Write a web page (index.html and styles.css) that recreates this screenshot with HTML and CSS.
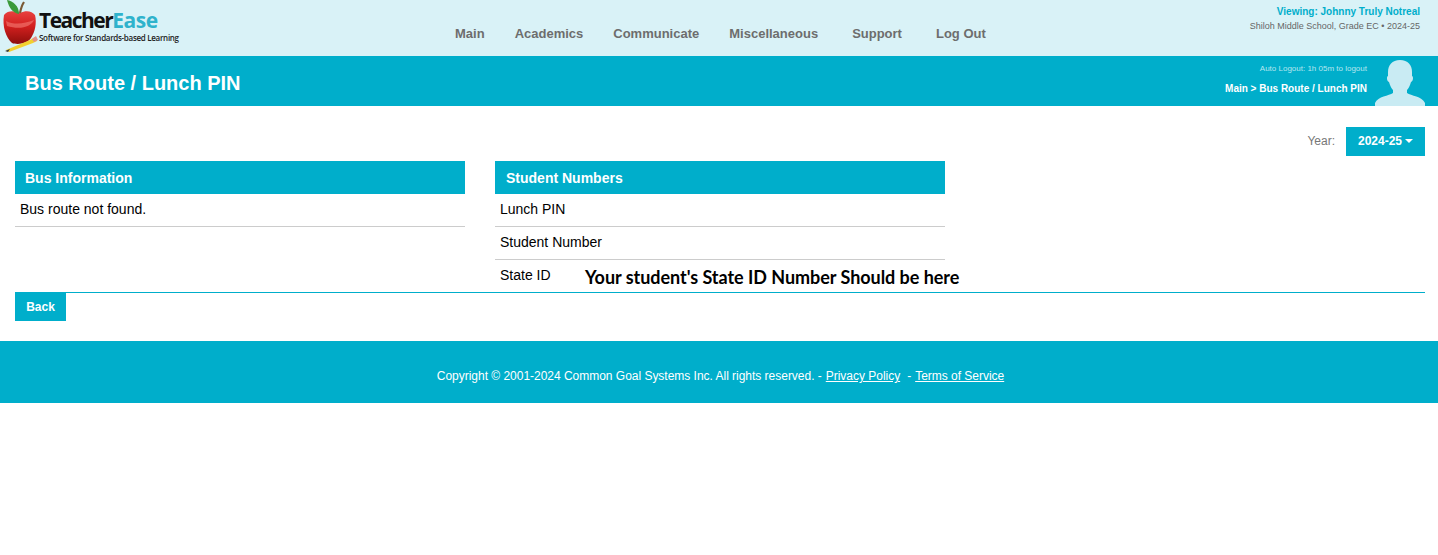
FILE: index.html
```html
<!DOCTYPE html>
<html lang="en">
<head>
<meta charset="utf-8">
<title>Bus Route / Lunch PIN</title>
<link rel="stylesheet" href="styles.css">
</head>
<body>
<header class="topbar">
  <a class="logo" href="#">
    <svg class="apple" width="38" height="54" viewBox="0 0 38 54" aria-hidden="true">
      <defs>
        <linearGradient id="appleFill" x1="0" y1="0" x2="0" y2="1">
          <stop offset="0" stop-color="#e8413f"/>
          <stop offset=".45" stop-color="#d3201f"/>
          <stop offset="1" stop-color="#8e0f0c"/>
        </linearGradient>
      </defs>
      <path d="M4 15 C8 10 15 11 20 13 C26 10 32 11 35 15 C37 23 35 32 31 38 C27 44 17 45 12 43 C6 38 2 26 4 15Z" fill="url(#appleFill)"/>
      <path d="M6 21 C14 25 24 24 34 20 C31 27 20 30 7 26Z" fill="#f0706a" opacity=".7"/>
      <path d="M20 13 C21 8 22 5 24 2" stroke="#7a5a34" stroke-width="2.2" fill="none"/>
      <path d="M7 0 C13 1 19 6 19 14 C13 13 9 8 7 0Z" fill="#3b9a3a"/>
      <path d="M6 50 L30 40 L35 37 L37 41 L33 43 L9 52Z" fill="#f2d02e"/>
      <path d="M32 39 L36 36 L38 40 L34 42Z" fill="#e58f8a"/>
      <path d="M5 51 L10 49 L8 52Z" fill="#3a3a3a"/>
    </svg>
    <span class="logo-text">
      <span class="logo-name">Teacher<span class="logo-ease">Ease</span></span>
      <span class="logo-tag">Software for Standards-based Learning</span>
    </span>
  </a>
  <nav class="nav">
    <a href="#">Main</a>
    <a href="#">Academics</a>
    <a href="#">Communicate</a>
    <a href="#">Miscellaneous</a>
    <a class="nav-wide" href="#">Support</a>
    <a class="nav-wide" href="#">Log Out</a>
  </nav>
  <div class="viewing">
    <div class="viewing-name">Viewing: Johnny Truly Notreal</div>
    <div class="viewing-school">Shiloh Middle School, Grade EC • 2024-25</div>
  </div>
</header>

<section class="banner">
  <h1>Bus Route / Lunch PIN</h1>
  <div class="banner-right">
    <div class="banner-meta">
      <div class="autologout">Auto Logout: 1h 05m to logout</div>
      <div class="crumbs">Main &gt; Bus Route / Lunch PIN</div>
    </div>
    <svg class="avatar" width="50" height="46" viewBox="0 0 50 46" aria-hidden="true">
      <path d="M25 0 C33 0 37 5 37 12 L37 16 C38.500 16.500 38.500 21 36 22 C35 26 33 29 32 30 L32 33 C36 36 47 36 50 43 L50 46 L0 46 L0 43 C3 36 14 36 18 33 L18 30 C17 29 15 26 14 22 C11.500 21 11.500 16.500 13 16 L13 12 C13 5 17 0 25 0Z" fill="#c9ebf3"/>
    </svg>
  </div>
</section>

<main class="content">
  <div class="year-row">
    <span class="year-label">Year:</span>
    <button class="year-btn" type="button">2024-25<span class="caret"></span></button>
  </div>
  <div class="panels">
    <section class="panel">
      <h2 class="panel-title-tight">Bus Information</h2>
      <div class="row">Bus route not found.</div>
    </section>
    <section class="panel">
      <h2>Student Numbers</h2>
      <div class="row">Lunch PIN</div>
      <div class="row">Student Number</div>
      <div class="row row-last">State ID</div>
      <div class="note">Your student's State ID Number Should be here</div>
    </section>
  </div>
  <button class="back" type="button">Back</button>
</main>

<footer class="footer">
  <span>Copyright © 2001-2024 Common Goal Systems Inc. All rights reserved. -</span>
  <a href="#">Privacy Policy</a>
  <span class="footer-dash">-</span>
  <a href="#">Terms of Service</a>
</footer>
</body>
</html>
```

FILE: styles.css
```css
* { box-sizing: border-box; }
html, body { margin: 0; padding: 0; }
body {
  background: #fff;
  color: #000;
  font-family: "Liberation Sans", Arial, sans-serif;
  font-size: 14px;
}
a { color: inherit; text-decoration: none; }

.topbar {
  height: 56px;
  background: #d9f2f7;
  display: flex;
}
.logo {
  width: 455px;
  display: flex;
  align-items: flex-start;
}
.apple { flex: none; }
.logo-text {
  display: flex;
  flex-direction: column;
  margin-top: 8px;
  margin-left: 1px;
}
.logo-name {
  font-family: "Open Sans", sans-serif;
  font-weight: 700;
  font-size: 21px;
  line-height: 24px;
  letter-spacing: -1.500px;
  color: #111;
}
.logo-ease {
  color: #2fb3cc;
  letter-spacing: -.500px;
}
.logo-tag {
  font-family: "Open Sans", sans-serif;
  font-weight: 600;
  font-size: 8px;
  line-height: 12px;
  letter-spacing: -.300px;
  color: #222;
  white-space: nowrap;
}
.nav {
  display: flex;
  gap: 30px;
  padding-top: 26px;
  font-weight: 700;
  font-size: 13px;
  line-height: 16px;
  color: #6d6d6d;
}
.nav-wide { margin-left: 4px; }
.viewing {
  margin-left: auto;
  padding: 6px 18px 0 0;
  text-align: right;
}
.viewing-name {
  color: #00aecb;
  font-weight: 700;
  font-size: 10px;
  line-height: 12px;
}
.viewing-school {
  color: #666;
  font-size: 9px;
  line-height: 12px;
  margin-top: 2px;
}

.banner {
  height: 50px;
  background: #00aecb;
  display: flex;
  justify-content: space-between;
  color: #fff;
  padding: 0 13px 0 25px;
}
.banner h1 {
  margin: 0;
  font-size: 20px;
  font-weight: 700;
  line-height: 54px;
}
.banner-right { display: flex; align-items: flex-end; }
.banner-meta {
  text-align: right;
  margin-right: 8px;
  align-self: flex-start;
}
.autologout {
  font-size: 8px;
  line-height: 10px;
  margin-top: 8px;
  color: #b5e6ef;
}
.crumbs {
  font-size: 10px;
  font-weight: 700;
  line-height: 12px;
  margin-top: 9px;
}
.avatar { display: block; flex: none; }

.content {
  padding: 21px 13px 0 15px;
  height: 235px;
}
.year-row {
  display: flex;
  justify-content: flex-end;
  align-items: center;
  gap: 11px;
  height: 29px;
}
.year-label { color: #777; font-size: 12px; margin-top: -2px; }
.year-btn {
  width: 79px;
  height: 29px;
  border: 0;
  padding: 0 0 2px;
  background: #00aecb;
  color: #fff;
  font: 700 12px "Liberation Sans", Arial, sans-serif;
}
.caret {
  display: inline-block;
  margin-left: 3px;
  vertical-align: 2px;
  border-top: 4px solid #fff;
  border-left: 4px solid transparent;
  border-right: 4px solid transparent;
}
.panels {
  display: flex;
  gap: 30px;
  margin-top: 5px;
  height: 132px;
  border-bottom: 1px solid #00aecb;
}
.panel { width: 450px; position: relative; }
.panel h2 {
  margin: 0;
  height: 33px;
  background: #00aecb;
  color: #fff;
  font-size: 14px;
  font-weight: 700;
  line-height: 34px;
  padding-left: 11px;
}
.panel .panel-title-tight { padding-left: 10px; }
.row {
  height: 33px;
  padding: 7px 5px 0;
  font-size: 14px;
  line-height: 16px;
  border-bottom: 1px solid #ccc;
}
.row-last { border-bottom: 0; height: 32px; }
.note {
  position: absolute;
  left: 90px;
  top: 105px;
  font-family: Lato, sans-serif;
  font-weight: 700;
  font-size: 18px;
  line-height: 22px;
  letter-spacing: -.040px;
  white-space: nowrap;
  color: #000;
}
.back {
  display: block;
  width: 51px;
  height: 28px;
  border: 0;
  padding: 0;
  background: #00aecb;
  color: #fff;
  font: 700 12px "Liberation Sans", Arial, sans-serif;
}

.footer {
  height: 62px;
  background: #00aecb;
  color: #fff;
  font-size: 12px;
  letter-spacing: -.020px;
  display: flex;
  justify-content: center;
  align-items: center;
  gap: 4px;
  padding: 8px 0 0 3px;
}
.footer a { text-decoration: underline; }
.footer-dash { margin-left: 3px; }
```
